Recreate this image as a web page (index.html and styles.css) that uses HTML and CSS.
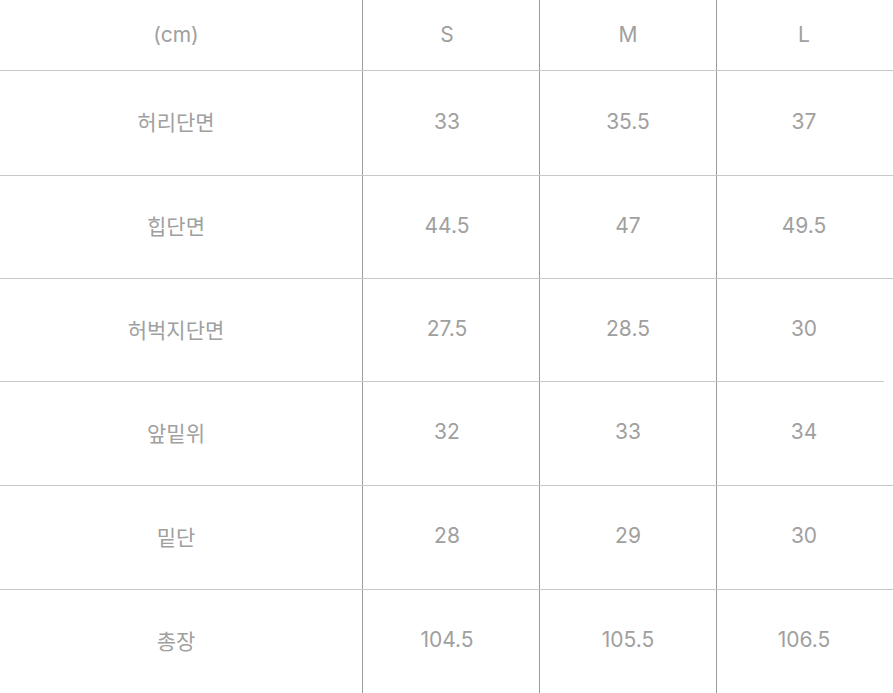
FILE: index.html
```html
<!DOCTYPE html>
<html lang="ko">
<head>
<meta charset="utf-8">
<link rel="stylesheet" href="styles.css">
</head>
<body>
<div class="table">
  <div class="row head">
    <div class="cell c1">(cm)</div><div class="cell c2">S</div><div class="cell c3">M</div><div class="cell c4">L</div>
  </div>
  <div class="row r1">
    <div class="cell c1">허리단면</div><div class="cell c2">33</div><div class="cell c3">35.5</div><div class="cell c4">37</div>
  </div>
  <div class="row r2">
    <div class="cell c1">힙단면</div><div class="cell c2">44.5</div><div class="cell c3">47</div><div class="cell c4">49.5</div>
  </div>
  <div class="row r3 short">
    <div class="cell c1">허벅지단면</div><div class="cell c2">27.5</div><div class="cell c3">28.5</div><div class="cell c4">30</div>
  </div>
  <div class="row r4">
    <div class="cell c1">앞밑위</div><div class="cell c2">32</div><div class="cell c3">33</div><div class="cell c4">34</div>
  </div>
  <div class="row r5">
    <div class="cell c1">밑단</div><div class="cell c2">28</div><div class="cell c3">29</div><div class="cell c4">30</div>
  </div>
  <div class="row r6 last">
    <div class="cell c1">총장</div><div class="cell c2">104.5</div><div class="cell c3">105.5</div><div class="cell c4">106.5</div>
  </div>
</div>
</body>
</html>
```
FILE: styles.css
```css
html, body {
  margin: 0;
  padding: 0;
  background: #fff;
}
body {
  width: 893px;
  height: 693px;
  overflow: hidden;
  font-family: "Inter", "Noto Sans CJK KR", sans-serif;
  font-size: 21px;
  color: #a0a0a0;
}
.table {
  display: flex;
  flex-direction: column;
  width: 893px;
}
.row {
  display: grid;
  grid-template-columns: 362px 177px 177px 177px;
  box-sizing: border-box;
  border-bottom: 1px solid #c8c8c8;
  position: relative;
}
.row.short {
  border-bottom: none;
}
.row.short::after {
  content: "";
  position: absolute;
  left: 0;
  bottom: 0;
  width: 884px;
  height: 1px;
  background: #c8c8c8;
}
.row.last {
  border-bottom: none;
}
.head { height: 71px; }
.r1 { height: 105px; }
.r2 { height: 103px; }
.r3 { height: 103px; }
.r4 { height: 104px; }
.r5 { height: 104px; }
.r6 { height: 103px; }
.cell {
  display: flex;
  align-items: center;
  justify-content: center;
  box-sizing: border-box;
}
.row:not(.head) .cell { padding-bottom: 4px; }
.head .cell { padding-bottom: 2px; }
.c1 { padding-right: 10px; }
.c2 { border-left: 1px solid #9c9c9c; padding-right: 8px; }
.c3 { border-left: 1px solid #9c9c9c; }
.c4 { border-left: 1px solid #9c9c9c; padding-right: 2px; }
```
